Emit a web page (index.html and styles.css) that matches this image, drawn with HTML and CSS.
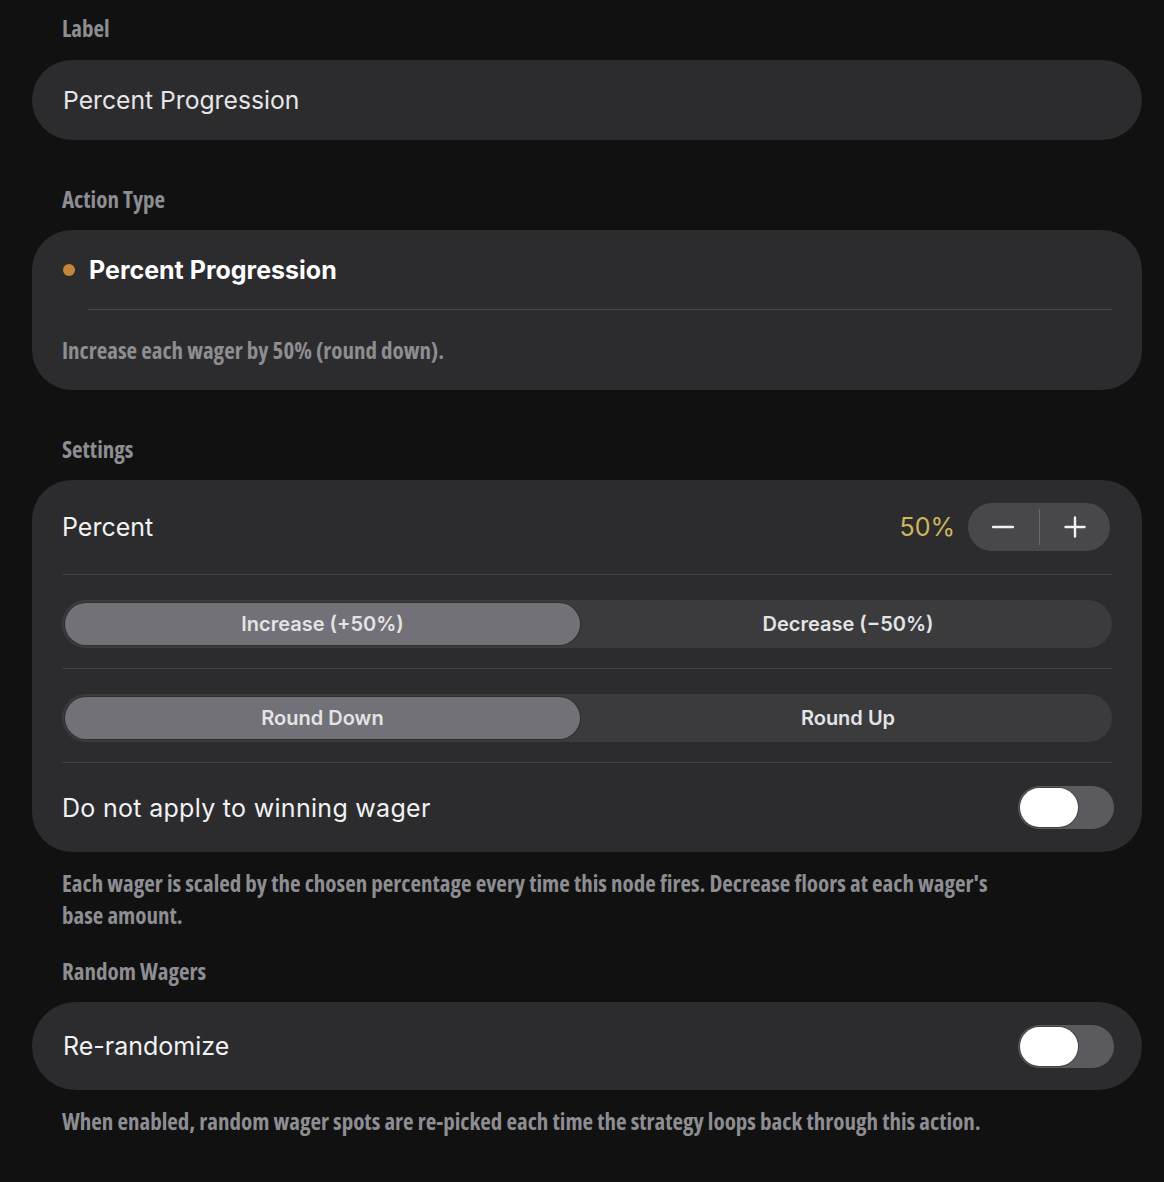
FILE: index.html
```html
<!DOCTYPE html>
<html lang="en">
<head>
<meta charset="utf-8">
<title>Percent Progression</title>
<link rel="stylesheet" href="styles.css">
</head>
<body>
<main class="page">
  <section class="section">
    <h2 class="sec-head first">Label</h2>
    <div class="card field">Percent Progression</div>
  </section>

  <section class="section">
    <h2 class="sec-head">Action Type</h2>
    <div class="card action">
      <div class="action-title"><span class="dot"></span><span>Percent Progression</span></div>
      <div class="action-rule"></div>
      <p class="action-desc">Increase each wager by 50% (round down).</p>
    </div>
  </section>

  <section class="section">
    <h2 class="sec-head">Settings</h2>
    <div class="card settings">
      <div class="row percent-row">
        <span class="row-label">Percent</span>
        <div class="percent-ctrl">
          <span class="pct-value">50%</span>
          <div class="stepper">
            <button class="step-btn" aria-label="decrease">
              <svg width="22" height="22" viewBox="0 0 22 22"><path d="M1 11h20" stroke="#f2f2f4" stroke-width="2.4" stroke-linecap="round"/></svg>
            </button>
            <span class="step-sep"></span>
            <button class="step-btn" aria-label="increase">
              <svg width="22" height="22" viewBox="0 0 22 22"><path d="M1.5 11h19M11 1.5v19" stroke="#f2f2f4" stroke-width="2.4" stroke-linecap="round"/></svg>
            </button>
          </div>
        </div>
      </div>
      <div class="row seg-row">
        <div class="segment">
          <span class="seg-opt selected">Increase (+50%)</span>
          <span class="seg-opt">Decrease (&minus;50%)</span>
        </div>
      </div>
      <div class="row seg-row">
        <div class="segment">
          <span class="seg-opt selected">Round Down</span>
          <span class="seg-opt">Round Up</span>
        </div>
      </div>
      <div class="row toggle-row">
        <span class="row-label">Do not apply to winning wager</span>
        <span class="toggle"><span class="knob"></span></span>
      </div>
    </div>
    <p class="note">Each wager is scaled by the chosen percentage every time this node fires. Decrease floors at each wager's base amount.</p>
  </section>

  <section class="section">
    <h2 class="sec-head tight">Random Wagers</h2>
    <div class="card single">
      <span class="row-label">Re-randomize</span>
      <span class="toggle"><span class="knob"></span></span>
    </div>
    <p class="note">When enabled, random wager spots are re-picked each time the strategy loops back through this action.</p>
  </section>
</main>
</body>
</html>
```

FILE: styles.css
```css
* { box-sizing: border-box; }
html, body { margin: 0; padding: 0; }
body {
  background: #111112;
  color: #ececee;
  font-family: Inter, "Noto Sans", "DejaVu Sans", sans-serif;
  width: 1164px;
  height: 1182px;
  overflow: hidden;
}
.page {
  padding: 0 22px 0 32px;
}
.sec-head,
.action-desc,
.note {
  font-family: "Open Sans", "DejaVu Sans", sans-serif;
  font-stretch: 75%;
  font-weight: 700;
  font-size: 23px;
  letter-spacing: 0;
  color: #8d8d92;
}
.sec-head {
  margin: 44px 0 14px 30px;
  height: 32px;
  line-height: 31px;
}
.sec-head.first { margin-top: 13px; margin-bottom: 15px; }
.sec-head.tight { margin-top: 25px; }

.card {
  background: #2c2c2e;
  border-radius: 40px;
}
.field {
  height: 80px;
  display: flex;
  align-items: center;
  padding: 0 31px;
  font-size: 24.7px;
  color: #e6e6e8;
}

.action { padding: 0 30px; height: 160px; }
.action-title {
  height: 79px;
  display: flex;
  align-items: center;
  gap: 14px;
  font-size: 25px;
  font-weight: 700;
  color: #ffffff;
  padding-top: 1px;
}
.dot {
  width: 12px;
  height: 12px;
  border-radius: 50%;
  background: #c4853b;
  margin-left: 1px;
}
.action-rule {
  height: 1px;
  background: #48484b;
  margin-left: 26px;
}
.action-desc {
  margin: 0;
  height: 80px;
  line-height: 81px;
}

.settings { padding: 0 30px; border-radius: 40px; }
.row {
  display: flex;
  align-items: center;
  justify-content: space-between;
  border-bottom: 1px solid #414144;
}
.row:last-child { border-bottom: none; }
.percent-row { height: 95px; }
.seg-row { height: 94px; padding-top: 4px; }
.toggle-row { height: 89px; }
.row-label {
  font-size: 25px;
  color: #f2f2f4;
}
.toggle-row .row-label { letter-spacing: 0.3px; }
.percent-ctrl {
  display: flex;
  align-items: center;
  gap: 13px;
  margin-right: 2px;
}
.pct-value {
  font-size: 25px;
  color: #cdb65e;
}
.stepper {
  width: 142px;
  height: 48px;
  border-radius: 24px;
  background: #48484b;
  display: flex;
  align-items: center;
}
.step-btn {
  flex: 1;
  height: 48px;
  background: none;
  border: none;
  padding: 0;
  display: flex;
  align-items: center;
  justify-content: center;
}
.step-sep {
  width: 1px;
  height: 36px;
  background: #6a6a6e;
}

.segment {
  width: 100%;
  height: 48px;
  border-radius: 24px;
  background: #3b3b3e;
  padding: 3px;
  display: grid;
  grid-template-columns: 1fr 1fr;
}
.seg-opt {
  display: flex;
  align-items: center;
  justify-content: center;
  border-radius: 21px;
  font-size: 20px;
  font-weight: 600;
  color: #e4e4e6;
}
.seg-opt.selected {
  background: #727177;
  box-shadow: 0 0 0 1px #2f2f31;
  margin-right: 7px;
}

.toggle {
  width: 96px;
  height: 43px;
  border-radius: 22px;
  background: #5b5b5f;
  padding: 2px;
  display: flex;
  margin-right: -2px;
}
.knob {
  width: 58px;
  height: 39px;
  border-radius: 20px;
  background: #ffffff;
  box-shadow: 0 0 0 1px rgba(0,0,0,0.25);
}

.single {
  height: 88px;
  border-radius: 44px;
  padding: 0 30px 0 31px;
  display: flex;
  align-items: center;
  justify-content: space-between;
}

.note {
  margin: 15px 0 0 30px;
  line-height: 32px;
  max-width: 960px;
}
```
